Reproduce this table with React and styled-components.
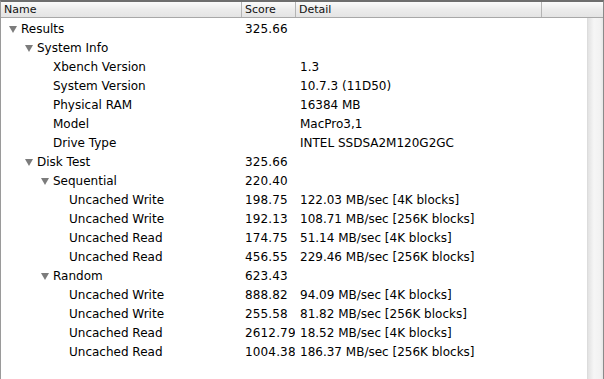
import React from "react";
import styled, { createGlobalStyle } from "styled-components";

const Global = createGlobalStyle`
  html, body { margin: 0; padding: 0; background: #fff; }
  body { font-family: "DejaVu Sans", "Liberation Sans", sans-serif; }
`

const Frame = styled.div`
  width: 604px;
  height: 379px;
  box-sizing: border-box;
  border-top: 2px solid #6e6e6e;
  border-left: 1px solid #9a9a9a;
  border-right: 1px solid #8a8a8a;
  display: flex;
  flex-direction: column;
  overflow: hidden;
  background: #fff;
`
const Header = styled.div`
  height: 15px;
  display: flex;
  border-bottom: 1px solid #a8a8a8;
  background: linear-gradient(#fbfbfb, #ececec 50%, #e4e4e4);
  font-size: 11px;
  color: #111;
`
const HeadCell = styled.div`
  width: ${p => p.w}px;
  flex-shrink: 0;
  box-sizing: border-box;
  padding-left: 3px;
  line-height: 15px;
  border-right: ${p => p.last ? "none" : "1px solid #b4b4b4"};
  ${p => p.flex && "flex: 1;"}
`
const Body = styled.div`
  flex: 1;
  display: flex;
`
const Rows = styled.div`
  flex: 1;
  padding-top: 1px;
`
const Scroll = styled.div`
  width: 15px;
  background: linear-gradient(90deg, #e2e2e2, #f6f6f6 40%, #f2f2f2 80%, #e6e6e6);
  border-left: 1px solid #dcdcdc;
`
const Row = styled.div`
  height: 19px;
  display: flex;
  align-items: center;
  font-size: 12px;
  color: #000;
  white-space: nowrap;
`
const NameCell = styled.div`
  width: 240px;
  box-sizing: border-box;
  padding-left: ${p => p.level * 16 + 7}px;
  display: flex;
  align-items: center;
`
const Twisty = styled.span`
  width: 0;
  height: 0;
  border-left: 4px solid transparent;
  border-right: 4px solid transparent;
  border-top: 7px solid #7c7c7c;
  margin-left: 1px;
  margin-right: 4px;
  margin-top: 1px;
`
const Spacer = styled.span`
  width: 13px;
`
const ScoreCell = styled.div`
  width: 54px;
  padding-left: 4px;
  box-sizing: border-box;
  overflow: hidden;
  letter-spacing: 0.15px;
`
const DetailCell = styled.div`
  padding-left: 5px;
`

const data = [
  [0, true, "Results", "325.66", ""],
  [1, true, "System Info", "", ""],
  [2, false, "Xbench Version", "", "1.3"],
  [2, false, "System Version", "", "10.7.3 (11D50)"],
  [2, false, "Physical RAM", "", "16384 MB"],
  [2, false, "Model", "", "MacPro3,1"],
  [2, false, "Drive Type", "", "INTEL SSDSA2M120G2GC"],
  [1, true, "Disk Test", "325.66", ""],
  [2, true, "Sequential", "220.40", ""],
  [3, false, "Uncached Write", "198.75", "122.03 MB/sec [4K blocks]"],
  [3, false, "Uncached Write", "192.13", "108.71 MB/sec [256K blocks]"],
  [3, false, "Uncached Read", "174.75", "51.14 MB/sec [4K blocks]"],
  [3, false, "Uncached Read", "456.55", "229.46 MB/sec [256K blocks]"],
  [2, true, "Random", "623.43", ""],
  [3, false, "Uncached Write", "888.82", "94.09 MB/sec [4K blocks]"],
  [3, false, "Uncached Write", "255.58", "81.82 MB/sec [256K blocks]"],
  [3, false, "Uncached Read", "2612.79", "18.52 MB/sec [4K blocks]"],
  [3, false, "Uncached Read", "1004.38", "186.37 MB/sec [256K blocks]"],
]

const App = () => {
  return (
    <>
      <Global />
      <Frame>
        <Header>
          <HeadCell w={241}>Name</HeadCell>
          <HeadCell w={54}>Score</HeadCell>
          <HeadCell w={246}>Detail</HeadCell>
          <HeadCell flex last></HeadCell>
        </Header>
        <Body>
          <Rows>
            {data.map(([level, open, name, score, detail], i) => (
              <Row key={i}>
                <NameCell level={level}>
                  {open ? <Twisty /> : <Spacer />}
                  {name}
                </NameCell>
                <ScoreCell>{score}</ScoreCell>
                <DetailCell>{detail}</DetailCell>
              </Row>
            ))}
          </Rows>
          <Scroll />
        </Body>
      </Frame>
    </>
  )
}

export default App;
